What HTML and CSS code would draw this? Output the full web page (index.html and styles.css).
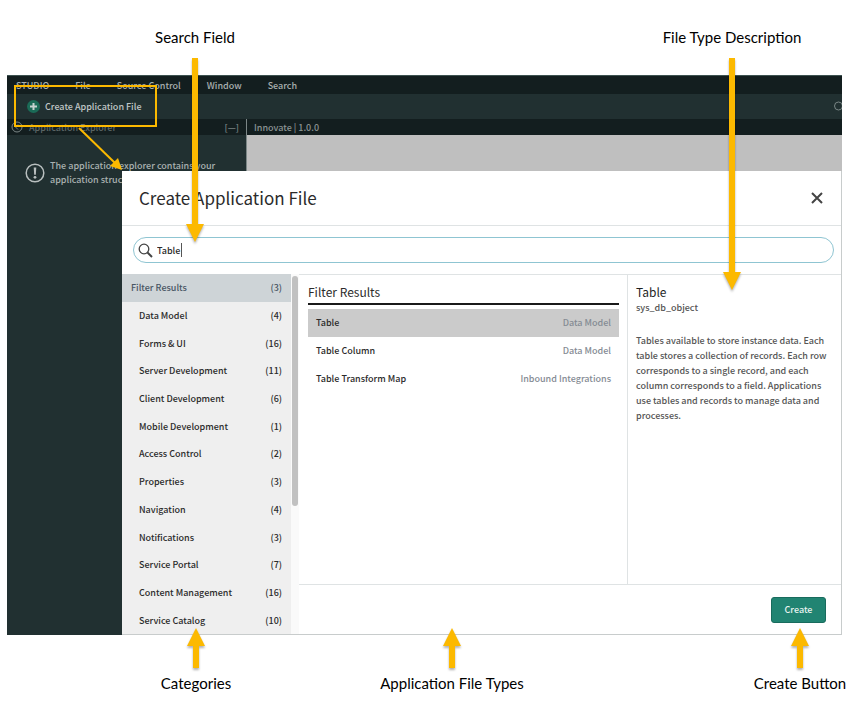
FILE: index.html
```html
<!DOCTYPE html>
<html lang="en">

<head>
  <meta charset="utf-8">
  <title>Create Application File</title>
  <link rel="stylesheet" href="styles.css">
</head>

<body>

  <div class="page">

    <div class="studio">
      <div class="app">
        <nav class="menubar">
          <a href="#">STUDIO</a>
          <a href="#">File</a>
          <a href="#">Source Control</a>
          <a href="#">Window</a>
          <a href="#">Search</a>
        </nav>
        <div class="toolbar">
          <button type="button" class="new-file">
            <svg width="13" height="13" viewBox="0 0 13 13">
              <circle cx="6.5" cy="6.5" r="6.5" fill="#1b6b57" />
              <path d="M6.5 3v7M3 6.5h7" stroke="#c5d2cf" stroke-width="2" />
            </svg>
            Create Application File
          </button>
          <svg class="toolbar-search" width="8" height="12" viewBox="0 0 8 12">
            <circle cx="4.500" cy="5" r="4" fill="none" stroke="#7b8686" />
          </svg>
        </div>
        <div class="workspace">
          <aside class="explorer">
            <div class="pane-head">
              <svg width="12" height="12" viewBox="0 0 12 12" fill="none" stroke="#7b8686">
                <circle cx="6" cy="6" r="5" />
                <path d="M7 3.5L4.500 6L7 8.500" />
              </svg>
              <span class="pane-title">Application Explorer</span>
              <span>[—]</span>
            </div>
            <div class="notice">
              <svg width="20" height="20" viewBox="0 0 20 20">
                <circle cx="10" cy="10" r="8.800" fill="none" stroke="#b9bfbf" stroke-width="1.500" />
                <path d="M8.700 4.500h2.600l-.5 7.300H9.200z" fill="#b9bfbf" />
                <circle cx="10" cy="14.300" r="1.400" fill="#b9bfbf" />
              </svg>
              <p>The application explorer contains your application structure</p>
            </div>
          </aside>
          <div class="editor">
            <div class="pane-head">Innovate | 1.0.0</div>
          </div>
        </div>
      </div>

      <div class="modal" role="dialog" aria-labelledby="modalTitle">
        <header class="modal-head">
          <h1 id="modalTitle">Create Application File</h1>
          <button type="button" class="close" aria-label="Close">
            <svg width="12" height="12" viewBox="0 0 12 12">
              <path d="M1 1l10 10M11 1L1 11" stroke="#444" stroke-width="2" />
            </svg>
          </button>
        </header>
        <div class="search-row">
          <label class="search">
            <svg width="15" height="15" viewBox="0 0 15 15" fill="none" stroke="#444">
              <circle cx="6" cy="6" r="4.800" stroke-width="1.300" />
              <path d="M9.500 9.500l4.500 4.500" stroke-width="2" />
            </svg>
            <input type="text" value="Table" aria-label="Search">
          </label>
        </div>
        <div class="modal-body">
          <ul class="categories">
            <li><button type="button" class="category active">Filter Results <span>(3)</span></button></li>
            <li><button type="button" class="category">Data Model <span>(4)</span></button></li>
            <li><button type="button" class="category">Forms &amp; UI <span>(16)</span></button></li>
            <li><button type="button" class="category">Server Development <span>(11)</span></button></li>
            <li><button type="button" class="category">Client Development <span>(6)</span></button></li>
            <li><button type="button" class="category">Mobile Development <span>(1)</span></button></li>
            <li><button type="button" class="category">Access Control <span>(2)</span></button></li>
            <li><button type="button" class="category">Properties <span>(3)</span></button></li>
            <li><button type="button" class="category">Navigation <span>(4)</span></button></li>
            <li><button type="button" class="category">Notifications <span>(3)</span></button></li>
            <li><button type="button" class="category">Service Portal <span>(7)</span></button></li>
            <li><button type="button" class="category">Content Management <span>(16)</span></button></li>
            <li><button type="button" class="category">Service Catalog <span>(10)</span></button></li>
          </ul>
          <div class="scrollbar">
            <div class="thumb"></div>
          </div>
          <div class="content">
            <div class="panes">
              <section class="results">
                <h2>Filter Results</h2>
                <ul>
                  <li><button type="button" class="result selected">Table <span>Data Model</span></button></li>
                  <li><button type="button" class="result">Table Column <span>Data Model</span></button></li>
                  <li><button type="button" class="result">Table Transform Map <span>Inbound Integrations</span></button></li>
                </ul>
              </section>
              <section class="details">
                <h2>Table</h2>
                <p class="type-name">sys_db_object</p>
                <p>Tables available to store instance data. Each table stores a collection of records. Each row corresponds to a single record, and each column corresponds to a field. Applications use tables and records to manage data and processes.</p>
              </section>
            </div>
            <footer class="modal-foot">
              <button type="button" class="create">Create</button>
            </footer>
          </div>
        </div>
      </div>
    </div>

    <!-- Callouts laid over the window -->
    <div class="highlight"></div>
    <svg class="pointer" width="48" height="48" viewBox="0 0 48 48">
      <path d="M2 2L38 37" stroke="#fcb900" stroke-width="2" />
      <path d="M45 44l-12-4l8-8z" fill="#fcb900" />
    </svg>

    <div class="callout search-note">
      <span>Search Field</span>
      <svg width="18" height="184" viewBox="0 0 18 184">
        <path d="M6 0h6v166h6l-9 18l-9-18h6z" fill="#fcb900" />
      </svg>
    </div>
    <div class="callout description-note">
      <span>File Type Description</span>
      <svg width="18" height="232" viewBox="0 0 18 232">
        <path d="M6 0h6v214h6l-9 18l-9-18h6z" fill="#fcb900" />
      </svg>
    </div>
    <div class="callout categories-note">
      <svg width="18" height="40" viewBox="0 0 18 40">
        <path d="M9 0l9 18h-6v22h-6v-22h-6z" fill="#fcb900" />
      </svg>
      <span>Categories</span>
    </div>
    <div class="callout types-note">
      <svg width="18" height="40" viewBox="0 0 18 40">
        <path d="M9 0l9 18h-6v22h-6v-22h-6z" fill="#fcb900" />
      </svg>
      <span>Application File Types</span>
    </div>
    <div class="callout create-note">
      <svg width="18" height="40" viewBox="0 0 18 40">
        <path d="M9 0l9 18h-6v22h-6v-22h-6z" fill="#fcb900" />
      </svg>
      <span>Create Button</span>
    </div>

  </div>

</body>

</html>
```
FILE: styles.css
```css
* {
  box-sizing: border-box;
}

body {
  margin: 0;
  background: #fff;
  color: #2b2b2b;
  font: 500 9px/15px "Noto Sans CJK SC", "Noto Sans", sans-serif;
}

h1, h2, p, ul {
  margin: 0;
  padding: 0;
}

h1, h2 {
  font-weight: normal;
}

ul {
  list-style: none;
}

button, input {
  border: 0;
  padding: 0;
  background: none;
  color: inherit;
  font: inherit;
}

button {
  cursor: pointer;
}

svg {
  flex: none;
}

.page {
  position: relative;
  padding: 75px 10px;
  padding-left: 7px;
}

/* The app and the dialog share one grid cell */
.studio {
  display: grid;
}

.app, .modal {
  grid-area: 1 / 1;
}

.app {
  display: flex;
  flex-direction: column;
  background: #213031;
  color: #a9b0b0;
  border-top: 1px solid #3d5250;
}

.menubar {
  display: flex;
  align-items: center;
  gap: 26px;
  height: 18px;
  padding: 0 9px;
  background: #131e1f;
}

.menubar a {
  color: inherit;
  text-decoration: none;
}

.toolbar {
  display: flex;
  align-items: center;
  justify-content: space-between;
  height: 25px;
  padding-left: 20px;
}

.new-file {
  display: flex;
  align-items: center;
  gap: 5px;
  color: #c0c6c6;
}

.workspace {
  display: flex;
  flex: 1;
}

.explorer {
  width: 240px;
  border-right: 1px solid #7b8686;
}

.editor {
  flex: 1;
  background: #bfbfbf;
}

.pane-head {
  display: flex;
  align-items: center;
  gap: 6px;
  height: 16px;
  padding: 0 7px;
  background: #131e1f;
  color: #8b9494;
}

.explorer .pane-head {
  padding-left: 4px;
  color: #7b8686;
}

.pane-title {
  flex: 1;
  color: #5d6767;
}

.notice {
  display: flex;
  align-items: center;
  gap: 5px;
  padding: 24px 18px;
  line-height: 14px;
}

.modal {
  display: flex;
  flex-direction: column;
  margin: 96px 0 0 115px;
  background: #fff;
  border: 1px solid #c8cccc;
  border-top: 0;
  border-left: 0;
}

.modal-head {
  display: flex;
  align-items: center;
  justify-content: space-between;
  height: 55px;
  padding: 0 18px 0 17px;
  border-bottom: 1px solid #dfe3e4;
}

.modal-head h1 {
  font-size: 17px;
  line-height: 24px;
}

.close {
  display: flex;
}

.search-row {
  padding: 11px 7px 11px 11px;
}

.search {
  display: flex;
  align-items: center;
  gap: 4px;
  height: 26px;
  padding: 0 16px 0 4px;
  border: 1px solid #8fc5d2;
  border-radius: 13px;
}

/* The gradient draws the text caret */
.search input {
  flex: 1;
  height: 14px;
  outline: none;
  background: linear-gradient(#555, #555) 24px 0 / 1px 14px no-repeat;
}

.modal-body {
  display: flex;
}

/* Rows share the height of the body */
.categories {
  display: grid;
  grid-auto-rows: 1fr;
  width: 169px;
  background: #efefef;
}

.category {
  display: flex;
  align-items: center;
  justify-content: space-between;
  width: 100%;
  height: 100%;
  padding: 0 9px 0 17px;
}

.category.active {
  padding-left: 9px;
  background: #ced4d7;
  color: #485563;
}

.scrollbar {
  width: 8px;
  padding: 2px 1px;
  background: #fafafa;
}

.thumb {
  height: 230px;
  border-radius: 3px;
  background: #c1c1c1;
}

.content {
  flex: 1;
  display: flex;
  flex-direction: column;
}

.panes {
  display: flex;
  min-height: 310px;
  border-top: 1px solid #dfe3e4;
}

.results {
  flex: 1;
  padding: 9px 8px 9px 9px;
}

.results h2, .details h2 {
  font-size: 12px;
  line-height: 16px;
}

.results h2 {
  padding-bottom: 3px;
  border-bottom: 2px solid #1a1a1a;
}

.results ul {
  display: grid;
  grid-auto-rows: 1fr;
  height: 87px;
  padding-top: 4px;
}

.result {
  display: flex;
  align-items: center;
  justify-content: space-between;
  width: 100%;
  height: 100%;
  padding: 0 8px;
}

.result span {
  color: #858b94;
}

.result.selected {
  background: #cbcbcb;
}

.details {
  width: 214px;
  padding: 9px 8px;
  border-left: 1px solid #dfe3e4;
  color: #555;
}

.details h2 {
  color: #1f1f1f;
}

.type-name {
  margin-bottom: 18px;
}

.modal-foot {
  display: flex;
  align-items: center;
  justify-content: flex-end;
  height: 50px;
  padding: 0 15px;
  border-top: 1px solid #dfe3e4;
}

.create {
  width: 55px;
  height: 26px;
  border: 1px solid #196b5d;
  border-radius: 3px;
  background: #218472;
  color: #e8f3f0;
}

/* Callouts */
.highlight {
  position: absolute;
  top: 85px;
  left: 14px;
  width: 143px;
  height: 42px;
  border: 2px solid #fcb900;
}

.pointer {
  position: absolute;
  top: 126px;
  left: 77px;
}

.callout {
  position: absolute;
  display: flex;
  flex-direction: column;
  align-items: center;
  width: 160px;
  color: #000;
  font: 15px/20px Lato, sans-serif;
}

.callout svg {
  overflow: visible;
  filter: drop-shadow(0 2px 1px rgba(0, 0, 0, 0.3));
}

.search-note, .description-note {
  top: 27px;
  gap: 11px;
}

.categories-note, .types-note, .create-note {
  top: 628px;
  gap: 5px;
}

.search-note {
  left: 115px;
}

.description-note {
  right: 40px;
}

.categories-note {
  left: 116px;
}

.types-note {
  left: 372px;
}

.create-note {
  right: 2px;
  width: 100px;
}
```
